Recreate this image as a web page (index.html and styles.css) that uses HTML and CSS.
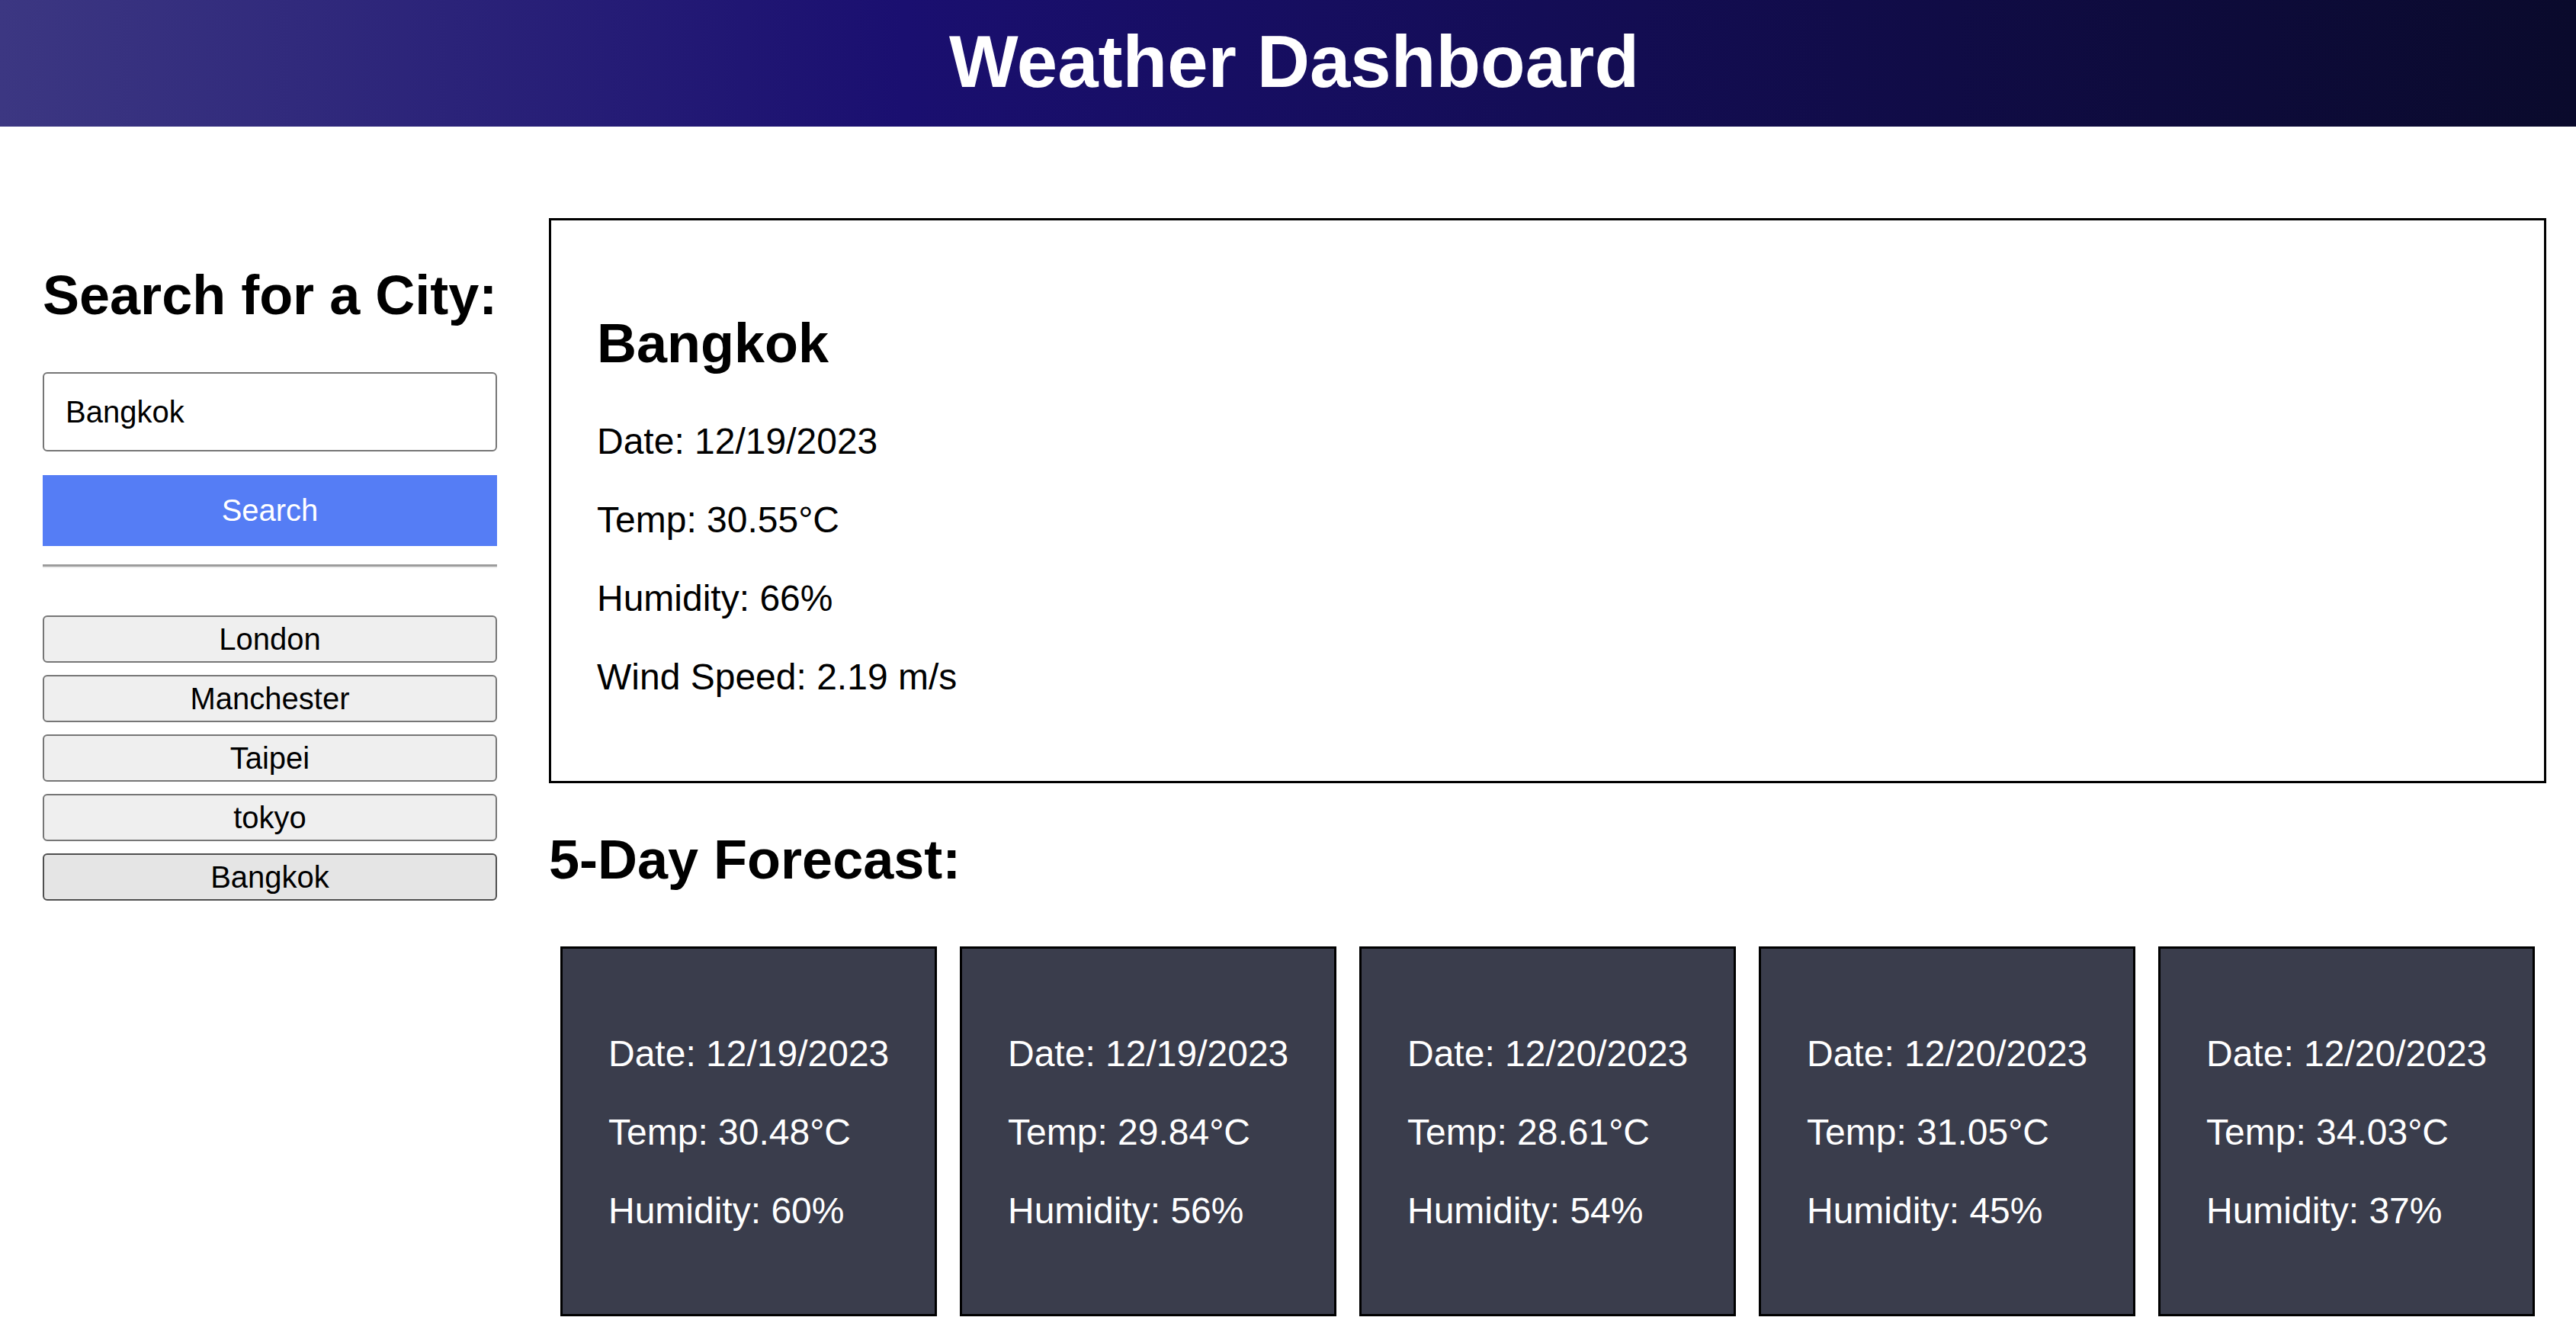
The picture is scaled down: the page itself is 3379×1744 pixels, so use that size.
FILE: index.html
```html
<!DOCTYPE html>
<html lang="en">
<head>
<meta charset="utf-8">
<title>Weather Dashboard</title>
<link rel="stylesheet" href="styles.css">
</head>
<body>
<header class="site-header">
  <h1 class="site-title">Weather Dashboard</h1>
</header>
<div class="page">
  <aside class="sidebar">
    <h2 class="sidebar-title">Search for a City:</h2>
    <input class="city-input" type="text" value="Bangkok">
    <button class="search-btn" type="button">Search</button>
    <hr class="divider">
    <div class="history">
      <button class="history-btn" type="button">London</button>
      <button class="history-btn" type="button">Manchester</button>
      <button class="history-btn" type="button">Taipei</button>
      <button class="history-btn" type="button">tokyo</button>
      <button class="history-btn history-btn-hover" type="button">Bangkok</button>
    </div>
  </aside>
  <main class="content">
    <section class="current">
      <h2 class="city-name">Bangkok</h2>
      <p class="stat">Date: 12/19/2023</p>
      <p class="stat">Temp: 30.55°C</p>
      <p class="stat">Humidity: 66%</p>
      <p class="stat">Wind Speed: 2.19 m/s</p>
    </section>
    <h2 class="forecast-title">5-Day Forecast:</h2>
    <div class="forecast">
      <div class="card">
        <p class="stat">Date: 12/19/2023</p>
        <p class="stat">Temp: 30.48°C</p>
        <p class="stat">Humidity: 60%</p>
      </div>
      <div class="card">
        <p class="stat">Date: 12/19/2023</p>
        <p class="stat">Temp: 29.84°C</p>
        <p class="stat">Humidity: 56%</p>
      </div>
      <div class="card">
        <p class="stat">Date: 12/20/2023</p>
        <p class="stat">Temp: 28.61°C</p>
        <p class="stat">Humidity: 54%</p>
      </div>
      <div class="card">
        <p class="stat">Date: 12/20/2023</p>
        <p class="stat">Temp: 31.05°C</p>
        <p class="stat">Humidity: 45%</p>
      </div>
      <div class="card">
        <p class="stat">Date: 12/20/2023</p>
        <p class="stat">Temp: 34.03°C</p>
        <p class="stat">Humidity: 37%</p>
      </div>
    </div>
  </main>
</div>
</body>
</html>
```

FILE: styles.css
```css
* {
  box-sizing: border-box;
}

html,
body {
  margin: 0;
  padding: 0;
  background: #ffffff;
}

body {
  font-family: "Liberation Sans", Arial, sans-serif;
  color: #000000;
}

.site-header {
  background: linear-gradient(90deg, #3c3782 0%, #1a0f70 35%, #0a0a2c 100%);
  color: #ffffff;
  text-align: center;
  padding: 26px 0 30px 16px;
}

.site-title {
  margin: 0;
  font-size: 96px;
  font-weight: bold;
  line-height: normal;
}

.page {
  display: flex;
  align-items: flex-start;
  gap: 68px;
  padding: 120px 39px 0 56px;
}

.sidebar {
  flex: none;
  width: 596px;
}

.sidebar-title {
  margin: 60px 0 60px;
  font-size: 72px;
  font-weight: bold;
  line-height: normal;
  white-space: nowrap;
}

.city-input {
  display: block;
  width: 100%;
  height: 104px;
  margin: 0 0 31px;
  padding: 0 28px;
  border: 2px solid #767676;
  border-radius: 6px;
  background: #ffffff;
  font-family: "Liberation Sans", Arial, sans-serif;
  font-size: 40px;
  color: #000000;
}

.search-btn {
  display: block;
  width: 100%;
  height: 93px;
  margin: 0;
  padding: 0;
  border: none;
  background: #557df5;
  color: #ffffff;
  font-family: "Liberation Sans", Arial, sans-serif;
  font-size: 40px;
}

.divider {
  margin: 24px 0 62px;
  height: 5px;
  border: none;
  border-top: 3px solid #9c9c9c;
  border-bottom: 2px solid #eeeeee;
}

.history {
  display: flex;
  flex-direction: column;
  gap: 16px;
}

.history-btn {
  display: block;
  width: 100%;
  height: 62px;
  margin: 0;
  padding: 0 12px;
  border: 2px solid #767676;
  border-radius: 6px;
  background: #efefef;
  color: #000000;
  font-family: "Liberation Sans", Arial, sans-serif;
  font-size: 40px;
}

.history-btn-hover {
  background: #e5e5e5;
  border-color: #4f4f4f;
}

.content {
  flex: 1;
  min-width: 0;
}

.current {
  border: 3px solid #000000;
  padding: 60px 60px 61px;
}

.city-name {
  margin: 60px 0 60px;
  font-size: 72px;
  font-weight: bold;
  line-height: normal;
}

.stat {
  margin: 48px 0;
  font-size: 48px;
  line-height: normal;
  white-space: nowrap;
}

.current .city-name + .stat {
  margin-top: 0;
}

.forecast-title {
  margin: 59px 0 58px;
  font-size: 72px;
  font-weight: bold;
  line-height: normal;
}

.forecast {
  display: flex;
  gap: 30px;
  padding: 15px 15px 12px;
}

.card {
  flex: 1;
  min-width: 0;
  border: 3px solid #000000;
  background: #3a3d4c;
  color: #ffffff;
  padding: 62px 60px 60px;
}
```
